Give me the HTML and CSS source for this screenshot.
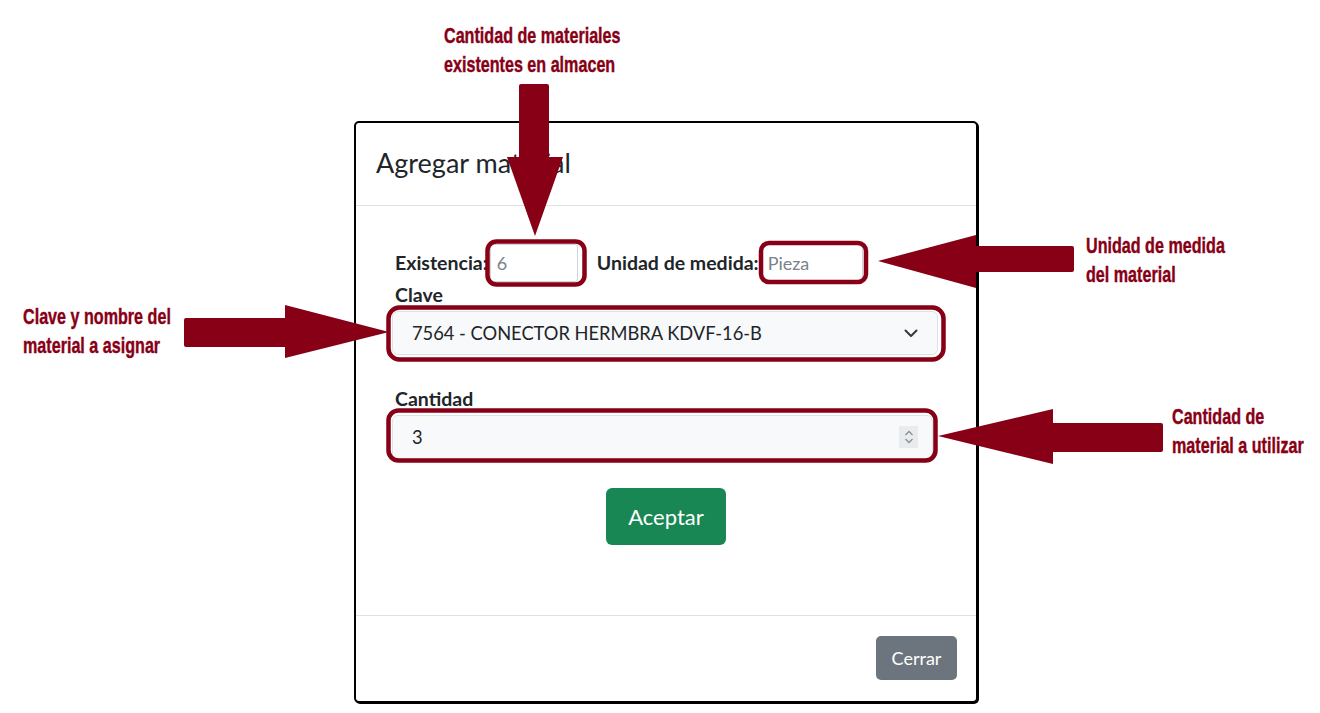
FILE: index.html
```html
<!DOCTYPE html>
<html lang="es">
<head>
<meta charset="utf-8">
<title>Agregar material</title>
<link rel="stylesheet" href="styles.css">
</head>
<body>
<div class="page">
  <div class="modal">
    <div class="modal-header">
      <h5 class="modal-title">Agregar material</h5>
    </div>
    <div class="modal-body">
      <form class="form">
        <div class="stock-row">
          <label class="inline-label" for="existencia">Existencia:</label>
          <input class="field field-stock" id="existencia" type="text" placeholder="6" readonly>
          <label class="inline-label unit-label" for="unidad">Unidad de medida:</label>
          <input class="field field-unit" id="unidad" type="text" placeholder="Pieza" readonly>
        </div>
        <label class="field-label">Clave</label>
        <div class="select">
          <span>7564 - CONECTOR HERMBRA KDVF-16-B</span>
          <svg class="chevron" width="14" height="10" viewBox="0 0 14 10"><path d="M1.5 2.5 L7 8 L12.5 2.5" fill="none" stroke="#343a40" stroke-width="2" stroke-linecap="round" stroke-linejoin="round"/></svg>
        </div>
        <label class="field-label qty-label">Cantidad</label>
        <div class="number">
          <span>3</span>
          <span class="spin">
            <svg width="12" height="18" viewBox="0 0 12 18"><path d="M2.5 7 L6 3.5 L9.5 7" fill="none" stroke="#8a8f96" stroke-width="1.3"/><path d="M2.5 11 L6 14.5 L9.5 11" fill="none" stroke="#8a8f96" stroke-width="1.3"/></svg>
          </span>
        </div>
        <div class="actions">
          <button type="button" class="btn btn-success">Aceptar</button>
        </div>
      </form>
    </div>
    <div class="modal-footer">
      <button type="button" class="btn btn-secondary">Cerrar</button>
    </div>
  </div>

  <svg class="marks" width="1320" height="713" viewBox="0 0 1320 713">
    <g fill="none" stroke="#870016" stroke-width="4.5">
      <rect x="487.5" y="241.5" width="97" height="43" rx="9"/>
      <rect x="761" y="243" width="105" height="39" rx="8"/>
      <rect x="388.5" y="307.5" width="555" height="52" rx="11"/>
      <rect x="388.5" y="410.5" width="547" height="50" rx="10"/>
    </g>
    <g fill="#870016">
      <rect x="519" y="84" width="30" height="76" rx="2"/>
      <polygon points="507,157 563,157 535,236"/>
      <rect x="973" y="246" width="101" height="26" rx="2"/>
      <polygon points="976,235 976,288 878,261"/>
      <rect x="184" y="318" width="104" height="29" rx="2"/>
      <polygon points="285,305 285,358 389,332"/>
      <rect x="1051" y="423" width="112" height="29" rx="2"/>
      <polygon points="1053,409 1053,464 938,436"/>
    </g>
  </svg>

  <div class="note note-stock">Cantidad de materiales<br>existentes en almacen</div>
  <div class="note note-unit">Unidad de medida<br>del material</div>
  <div class="note note-key">Clave y nombre del<br>material a asignar</div>
  <div class="note note-qty">Cantidad de<br>material a utilizar</div>
</div>
</body>
</html>
```

FILE: styles.css
```css
* { box-sizing: border-box; }

html, body {
  margin: 0;
  padding: 0;
  background: #ffffff;
}

body {
  font-family: "Lato", "Open Sans", sans-serif;
  color: #212529;
}

.page {
  position: relative;
  width: 1320px;
  height: 713px;
  padding: 121px 0 0 354px;
  overflow: hidden;
}

.modal {
  width: 624px;
  height: 582px;
  border: 2px solid #000;
  border-radius: 5px;
  box-shadow: 1px 1px 0 #000;
  background: #fff;
  display: flex;
  flex-direction: column;
}

.modal-header {
  height: 83px;
  border-bottom: 1px solid #dee2e6;
  display: flex;
  align-items: center;
  padding: 0 20px 2px;
}

.modal-title {
  margin: 0;
  font-size: 27px;
  font-weight: 400;
  line-height: 1.2;
  color: #212529;
}

.modal-body {
  flex: 1;
  padding: 38px 38px 0 36px;
}

.form {
  display: flex;
  flex-direction: column;
  align-items: flex-start;
}

.stock-row {
  display: flex;
  align-items: center;
  height: 38px;
  padding-left: 3px;
}

.inline-label {
  font-size: 19.5px;
  font-weight: 700;
  margin-right: 2px;
  padding-bottom: 2px;
}

.unit-label {
  margin-left: 19px;
}

.field {
  height: 38px;
  border: 1px solid #ced4da;
  border-radius: 3px;
  background: #fff;
  font-family: inherit;
  font-size: 18px;
  padding: 0 6px;
  color: #212529;
  outline: none;
}

.field::placeholder { color: #7b8289; }

.field-stock { width: 88px; }
.field-unit { width: 102px; }

.field-label {
  font-size: 19.5px;
  font-weight: 700;
  line-height: 24px;
  margin: 1px 0 4px 3px;
}

.select {
  width: 546px;
  height: 44px;
  border: 1px solid #dee2e6;
  border-radius: 6px;
  background: #f8f9fa;
  display: flex;
  align-items: center;
  justify-content: space-between;
  padding: 0 19px 0 19px;
  font-size: 18.3px;
}

.qty-label {
  margin-top: 32px;
}

.number {
  width: 541px;
  height: 44px;
  border: 1px solid #dee2e6;
  border-radius: 6px;
  background: #f8f9fa;
  display: flex;
  align-items: center;
  justify-content: space-between;
  padding: 0 14px 0 19px;
  font-size: 18.3px;
}

.spin {
  width: 19px;
  height: 22px;
  background: #e9ecef;
  display: flex;
  align-items: center;
  justify-content: center;
}

.actions {
  align-self: stretch;
  display: flex;
  justify-content: center;
  margin-top: 29px;
  padding-left: 2px;
}

.btn {
  border: none;
  font-family: inherit;
  color: #fff;
  cursor: pointer;
}

.btn-success {
  width: 120px;
  height: 57px;
  background: #198754;
  border-radius: 6px;
  font-size: 22px;
}

.modal-footer {
  height: 86px;
  border-top: 1px solid #dee2e6;
  display: flex;
  justify-content: flex-end;
  align-items: flex-start;
  padding: 20px 19px 0 0;
}

.btn-secondary {
  width: 81px;
  height: 44px;
  background: #6c757d;
  border-radius: 5px;
  font-size: 18px;
}

.marks {
  position: absolute;
  left: 0;
  top: 0;
  pointer-events: none;
}

.note {
  position: absolute;
  font-family: "Liberation Sans", Arial, sans-serif;
  font-weight: 700;
  font-size: 21.5px;
  line-height: 29px;
  color: #870016;
  -webkit-text-stroke: 0.4px #870016;
  white-space: nowrap;
  transform: scaleX(0.75);
  transform-origin: 0 0;
}

.note-stock { left: 444px; top: 22px; }
.note-unit { left: 1086px; top: 232px; }
.note-key { left: 23px; top: 303px; }
.note-qty { left: 1172px; top: 403px; }
```
